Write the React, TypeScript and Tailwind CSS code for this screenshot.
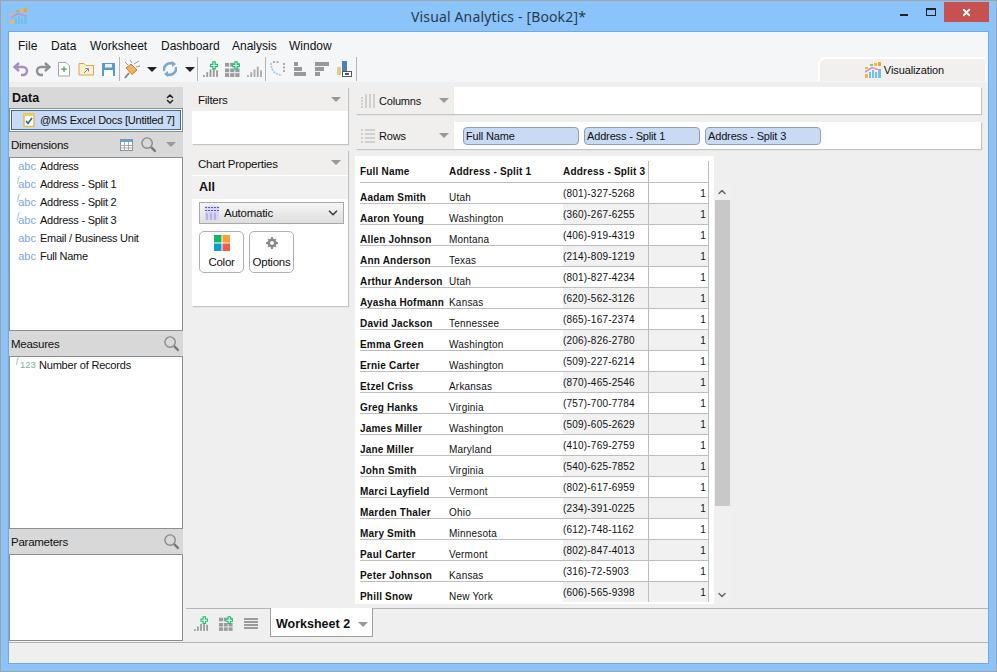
import { ChevronDown, ChevronUp, ChevronsUpDown, X } from 'lucide-react'

const rows = [
  ['Aadam Smith', 'Utah', '(801)-327-5268'],
  ['Aaron Young', 'Washington', '(360)-267-6255'],
  ['Allen Johnson', 'Montana', '(406)-919-4319'],
  ['Ann Anderson', 'Texas', '(214)-809-1219'],
  ['Arthur Anderson', 'Utah', '(801)-827-4234'],
  ['Ayasha Hofmann', 'Kansas', '(620)-562-3126'],
  ['David Jackson', 'Tennessee', '(865)-167-2374'],
  ['Emma Green', 'Washington', '(206)-826-2780'],
  ['Ernie Carter', 'Washington', '(509)-227-6214'],
  ['Etzel Criss', 'Arkansas', '(870)-465-2546'],
  ['Greg Hanks', 'Virginia', '(757)-700-7784'],
  ['James Miller', 'Washington', '(509)-605-2629'],
  ['Jane Miller', 'Maryland', '(410)-769-2759'],
  ['John Smith', 'Virginia', '(540)-625-7852'],
  ['Marci Layfield', 'Vermont', '(802)-617-6959'],
  ['Marden Thaler', 'Ohio', '(234)-391-0225'],
  ['Mary Smith', 'Minnesota', '(612)-748-1162'],
  ['Paul Carter', 'Vermont', '(802)-847-4013'],
  ['Peter Johnson', 'Kansas', '(316)-72-5903'],
  ['Phill Snow', 'New York', '(606)-565-9398'],
]

function Logo({ size = 16 }: { size?: number }) {
  return (
    <svg width={size} height={size} viewBox="0 0 16 16">
      <rect x="0" y="12" width="3" height="4" fill="#f6b73c" />
      <rect x="4" y="10" width="2" height="6" fill="#6cc3ee" />
      <rect x="7" y="8" width="2" height="8" fill="#6cc3ee" />
      <rect x="10" y="10" width="2" height="6" fill="#6cc3ee" />
      <rect x="13" y="7" width="3" height="9" fill="#6cc3ee" />
      <rect x="13" y="0" width="3" height="4" fill="#f6a623" />
      <rect x="9" y="1" width="3" height="3" fill="#f6b73c" />
      <rect x="5" y="2" width="3" height="2" fill="#8cc56a" />
      <rect x="0" y="5" width="3" height="2" fill="#f6b73c" />
      <path d="M0 10 L7 5.5 L16 8.5" stroke="#d08fc0" strokeWidth="1.5" fill="none" />
    </svg>
  )
}

function Plus() {
  return <path d="M10.5 1h2.5v2.5h2.5v2.5h-2.5v2.5h-2.5v-2.5h-2.5v-2.5h2.5z" fill="#fff" stroke="#1fc46a" strokeWidth="1.3" />
}

function Bars({ plus, size = 15 }: { plus?: boolean; size?: number }) {
  return (
    <svg width={size} height={size * 1.125} viewBox="0 0 16 18" className="block">
      <rect x="0" y="15" width="2" height="2" fill="#9b9b9b" />
      <rect x="3.5" y="12" width="2" height="5" fill="#9b9b9b" />
      <rect x="7" y="9" width="2" height="8" fill="#9b9b9b" />
      <rect x="10.5" y="6" width="2" height="11" fill="#9b9b9b" />
      <rect x="14" y="10" width="2" height="7" fill="#9b9b9b" />
      {plus && <Plus />}
    </svg>
  )
}

function GridPlus({ size = 15 }: { size?: number }) {
  return (
    <svg width={size} height={size * 1.125} viewBox="0 0 16 18" className="block">
      {[2, 8, 13].map(y => [0, 5.5, 11].map(x => <rect key={`${x}-${y}`} x={x} y={y} width="4.5" height="4" fill="#9b9b9b" />))}
      <Plus />
    </svg>
  )
}

function Magnifier() {
  return (
    <svg width="17" height="17" viewBox="0 0 18 18" fill="none" className="block">
      <circle cx="7.5" cy="7.5" r="5.5" stroke="#8a8a8a" strokeWidth="1.5" />
      <path d="M11.8 11.8 L16.5 16.5" stroke="#777" strokeWidth="2.4" />
    </svg>
  )
}

function Caret({ dark }: { dark?: boolean }) {
  return <span className={`block h-0 w-0 border-x-[5px] border-t-[5px] border-x-transparent ${dark ? 'border-t-[#222]' : 'border-t-[#999]'}`} />
}

function Sep() {
  return <span className="block h-[24px] w-px shrink-0 bg-[#b4b4b4]" />
}

function Toolbar() {
  return (
    <div className="flex h-[26px] items-center bg-[#f5f6f7] pl-[4px]">
      <svg width="16" height="16" viewBox="0 0 16 16" className="mr-[6px]" fill="none">
        <path d="M6 2 L1.5 6 L6 10 M2 6 H10 a3.5 3.5 0 0 1 0 8 H8" stroke="#a78cc6" strokeWidth="2.4" />
      </svg>
      <svg width="16" height="16" viewBox="0 0 16 16" className="mr-[5px]" fill="none">
        <path d="M10 2 L14.5 6 L10 10 M14 6 H6 a3.5 3.5 0 0 0 0 8 H8" stroke="#8f8f8f" strokeWidth="2.4" />
      </svg>
      <svg width="16" height="16" viewBox="0 0 16 16" className="mr-[5px]" fill="none">
        <path d="M2.5 1.5 H10 L13.5 5 V15 H2.5 Z" stroke="#a8a8a8" fill="#fff" />
        <path d="M8 5.5 V11 M5.2 8.2 H10.8" stroke="#3aa655" strokeWidth="1.2" />
      </svg>
      <svg width="18" height="16" viewBox="0 0 18 16" className="mr-[5px]" fill="none">
        <path d="M2 2.5 H7 L9 4.5 H16.5 V14 H2 Z" fill="#fdf0c8" stroke="#d0a85c" />
        <path d="M7 12 L11 8 M8.5 7.5 H11.5 V10.5" stroke="#4d94c8" />
      </svg>
      <svg width="18" height="16" viewBox="0 0 18 16" className="mr-px">
        <rect x="2" y="2" width="13" height="13" fill="#5b9bcc" />
        <rect x="5" y="3" width="7" height="3.5" fill="#e8f2fa" />
        <rect x="4" y="9" width="9" height="6" fill="#fff" />
      </svg>
      <Sep />
      <svg width="17" height="20" viewBox="0 0 17 20" className="ml-[4px]" fill="none">
        <path d="M1 19 L5 14" stroke="#888" strokeWidth="2" />
        <path d="M2 9 L7 5 L13 11 L8 15.5 Z" fill="#f0b45c" stroke="#b9803a" />
        <path d="M1 3 L4 6 M6 1 L8 4 M10 5 L15 2 M12 8 L16 7" stroke="#999" />
      </svg>
      <span className="ml-[6px]"><Caret dark /></span>
      <svg width="14" height="16" viewBox="0 0 14 16" className="ml-[6px]" fill="none">
        <path d="M1 10 C0 5 5 1 10 2.5 M13 6 C14 11 9 15 4 13.5" stroke="#7aa9d0" strokeWidth="2.6" />
        <path d="M9 0 L13 3 L9 6 Z M5 16 L1 13 L5 10 Z" fill="#7aa9d0" />
      </svg>
      <span className="ml-[8px]"><Caret dark /></span>
      <span className="ml-[2px]"><Sep /></span>
      <span className="ml-[5px]"><Bars plus /></span>
      <span className="ml-[7px]"><GridPlus /></span>
      <span className="ml-[7px] opacity-80"><Bars /></span>
      <span className="ml-[3px]"><Sep /></span>
      <svg width="15" height="16" viewBox="0 0 15 16" className="ml-[4px]" fill="none">
        <path d="M1 2 C1 9 5 14 12 14" stroke="#9cc6e6" strokeWidth="1.6" strokeDasharray="2 1" />
        <path d="M3 1 H10 M14 2 V12" stroke="#999" strokeWidth="1.6" strokeDasharray="2 1.5" />
      </svg>
      <svg width="12" height="14" viewBox="0 0 12 14" className="ml-[9px]" fill="#999">
        <rect y="0" width="4" height="4" /><rect y="5" width="8" height="4" /><rect y="10" width="12" height="4" />
      </svg>
      <svg width="14" height="14" viewBox="0 0 14 14" className="ml-[9px]" fill="#999">
        <rect y="0" width="14" height="4" /><rect y="5" width="9" height="4" /><rect y="10" width="5" height="4" />
      </svg>
      <svg width="15" height="16" viewBox="0 0 15 16" className="ml-[8px]">
        <rect x="0" y="6" width="4" height="8" fill="#e8c98a" />
        <rect x="5" y="0" width="5" height="10" fill="#4f7fb5" />
        <rect x="5.5" y="10.5" width="9" height="5" fill="#fff" stroke="#555" />
        <rect x="8" y="12" width="4" height="2" fill="#555" />
      </svg>
      <span className="ml-[4px]"><Sep /></span>
    </div>
  )
}

function SideHeader({ label, children }: { label: string; children?: React.ReactNode }) {
  return (
    <div className="flex h-[25px] items-center justify-between bg-[#d8d8d8] pl-[2px] pr-[3px] text-[11.5px] tracking-[-0.25px] text-[#111]">
      <span className="pt-[2px]">{label}</span>
      {children}
    </div>
  )
}

function Field({ label, calc }: { label: string; calc?: boolean }) {
  return (
    <div className="flex h-[18px] items-center">
      <span className="relative w-[26px] shrink-0 text-right text-[11px] text-[#7ba7e0]">
        {calc && <i className="absolute left-[7px] top-[-2px] font-['Liberation_Serif',serif] text-[8px]">f</i>}
        abc
      </span>
      <span className="ml-[4px] text-[11px] tracking-[-0.25px] text-[#111]">{label}</span>
    </div>
  )
}

function Sidebar() {
  return (
    <aside className="flex w-[174px] shrink-0 flex-col pt-[5px]">
      <div className="flex h-[21px] items-center justify-between bg-[#d8d8d8] pl-[3px] pr-[7px] pt-[2px] text-[12.5px] font-bold text-[#111]">
        <span>Data</span>
        <ChevronsUpDown size={12} strokeWidth={3} className="text-[#222]" />
      </div>
      <div className="flex h-[24px] items-center border border-[#8a8f94] bg-white px-px">
        <div className="flex h-[20px] w-full items-center whitespace-nowrap border border-[#3a6ea5] bg-[#c9daf4] pl-[11px] text-[11px] tracking-[-0.25px] text-[#111]">
          <svg width="12" height="14" viewBox="0 0 12 14" className="mr-[5px] shrink-0">
            <rect x="1" y="0.5" width="10" height="13" rx="1" fill="#fff" stroke="#e6b93c" strokeWidth="1.4" />
            <rect x="1" y="0.5" width="10" height="2.5" fill="#f3cf5a" />
            <path d="M3 8 L5 10.5 L9 5" stroke="#2a62a8" strokeWidth="1.6" fill="none" />
          </svg>
          @MS Excel Docs [Untitled 7]
        </div>
      </div>
      <SideHeader label="Dimensions">
        <div className="flex items-center gap-[7px] pr-[4px]">
          <svg width="13" height="12" viewBox="0 0 13 12" fill="none">
            <rect x="0.5" y="0.5" width="12" height="11" fill="#fff" stroke="#8a8f94" />
            <rect x="0.5" y="0.5" width="12" height="2.5" fill="#6ba0d0" />
            <path d="M0 6.5 H13 M0 9 H13 M4.5 3 V12 M8.5 3 V12" stroke="#a3a8ad" />
          </svg>
          <Magnifier />
          <span className="ml-[2px]"><Caret /></span>
        </div>
      </SideHeader>
      <div className="h-[174px] border border-[#8a8f94] bg-white">
        <div className="-mt-px">
          <Field label="Address" />
          <Field label="Address - Split 1" calc />
          <Field label="Address - Split 2" calc />
          <Field label="Address - Split 3" calc />
          <Field label="Email / Business Unit" />
          <Field label="Full Name" />
        </div>
      </div>
      <SideHeader label="Measures">
        <Magnifier />
      </SideHeader>
      <div className="h-[173px] border border-[#8a8f94] bg-white">
        <div className="flex h-[16px] items-center">
          <span className="relative w-[29px] shrink-0 pl-[10px] text-[9.5px] text-[#7fae9b]">
            <i className="absolute left-[6px] top-[-3px] font-['Liberation_Serif',serif] text-[8px]">f</i>
            123
          </span>
          <span className="text-[11px] tracking-[-0.2px] text-[#111]">Number of Records</span>
        </div>
      </div>
      <SideHeader label="Parameters">
        <Magnifier />
      </SideHeader>
      <div className="h-[87px] border border-[#8a8f94] bg-white" />
    </aside>
  )
}

function PanelHeader({ label, tall }: { label: string; tall?: boolean }) {
  return (
    <div className={`flex items-center justify-between bg-[#f0efed] pl-[6px] pr-[7px] text-[11.5px] tracking-[-0.25px] text-[#111] ${tall ? 'h-[25px]' : 'h-[24px]'}`}>
      <span className={tall ? 'pt-[4px]' : 'pt-[3px]'}>{label}</span>
      <Caret />
    </div>
  )
}

function MiddlePanels() {
  return (
    <div className="flex w-[156px] shrink-0 flex-col gap-[6px] pt-[5px]">
      <div className="h-[57px] bg-white shadow-[1px_1px_1px_#c4c4c4]">
        <PanelHeader label="Filters" />
      </div>
      <div className="h-[156px] bg-white shadow-[1px_1px_1px_#c4c4c4]">
        <PanelHeader label="Chart Properties" tall />
        <div className="mt-px flex h-[23px] items-center bg-[#f1f1f1] pl-[7px] text-[12.5px] font-bold text-[#111]">All</div>
        <div className="mx-[7px] mt-[3px] flex h-[22px] w-[145px] items-center border border-[#a9a9a9] bg-gradient-to-b from-[#f6f6f6] to-[#dedede] pl-[5px] pr-[3px] text-[11.5px] tracking-[-0.25px] text-[#111]">
          <svg width="14" height="14" viewBox="0 0 14 14" className="mr-[5px]">
            <rect width="14" height="14" fill="#d6d6f2" />
            <path d="M0 1.5 H14 M0 4.5 H14" stroke="#5c5ccf" strokeDasharray="2 1" />
            <path d="M2 7 V14 M6 7 V14 M10 7 V14" stroke="#8f8fd8" />
          </svg>
          <span className="flex-1 pt-[2px]">Automatic</span>
          <ChevronDown size={14} strokeWidth={3} className="text-[#444]" />
        </div>
        <div className="ml-[7px] mt-[7px] flex gap-[5px]">
          <div className="flex h-[42px] w-[45px] flex-col items-center rounded-[5px] border border-[#b0b0b0] pt-[3px] text-[11.5px] tracking-[-0.25px] text-[#111]">
            <svg width="16" height="16" viewBox="0 0 16 16">
              <rect width="7.5" height="7.5" fill="#16b667" />
              <rect x="8.5" width="7.5" height="7.5" fill="#f7a02e" />
              <rect y="8.5" width="7.5" height="7.5" fill="#0f9ccf" />
              <rect x="8.5" y="8.5" width="7.5" height="7.5" fill="#f25a4a" />
            </svg>
            <span className="mt-[3px] leading-[16px]">Color</span>
          </div>
          <div className="flex h-[42px] w-[45px] flex-col items-center rounded-[5px] border border-[#b0b0b0] pt-[3px] text-[11.5px] tracking-[-0.25px] text-[#111]">
            <svg width="16" height="16" viewBox="0 0 16 16" fill="#8c8c8c">
              <circle cx="8" cy="8" r="3.3" fill="none" stroke="#8c8c8c" strokeWidth="2.6" />
              <path d="M7 2h2v2.5h-2z M7 11.5h2v2.5h-2z M2 7h2.5v2h-2.5z M11.5 7h2.5v2h-2.5z M3.5 4.6l1.1-1.1 1.8 1.8-1.1 1.1z M9.6 10.7l1.1-1.1 1.8 1.8-1.1 1.1z M11.4 3.5l1.1 1.1-1.8 1.8-1.1-1.1z M5.3 9.6l1.1 1.1-1.8 1.8-1.1-1.1z" />
            </svg>
            <span className="mt-[3px] leading-[16px]">Options</span>
          </div>
        </div>
      </div>
    </div>
  )
}

function Shelf({ label, icon, children }: { label: string; icon: React.ReactNode; children?: React.ReactNode }) {
  return (
    <div className="flex h-[27px] w-[625px] bg-white shadow-[1px_1px_1px_#c4c4c4]">
      <div className="flex w-[98px] shrink-0 items-center border-r border-[#f0ead8] bg-[#f0efed] pl-[5px] pr-[4px] text-[11px] tracking-[-0.2px] text-[#111]">
        <span className="mr-[4px] w-[14px]">{icon}</span>
        <span className="flex-1 pt-[2px]">{label}</span>
        <Caret />
      </div>
      {children}
    </div>
  )
}

function Pill({ label }: { label: string }) {
  return (
    <div className="flex h-[18px] w-[116px] items-center rounded-[4px] border border-[#8f9fb8] bg-[#c9daf4] pl-[2px] pt-px text-[11px] tracking-[-0.15px] text-[#111]">
      {label}
    </div>
  )
}

function DataTable() {
  return (
    <div className="h-[448px] w-[359px] shrink-0 overflow-hidden bg-white pl-[5px] pt-[5px]">
      <div className="h-[441px] w-[349px] overflow-hidden text-[10px] tracking-[0.2px] text-[#111]">
        <div className="grid h-[22px] grid-cols-[89px_114px_86px_60px] border-b border-[#bdbdbd] font-bold">
          <span className="pt-[3px]">Full Name</span>
          <span className="pt-[3px]">Address - Split 1</span>
          <span className="whitespace-nowrap border-r border-[#bdbdbd] pt-[3px]">Address - Split 3</span>
          <span className="border-r border-[#bdbdbd]" />
        </div>
        {rows.map((r, i) => {
          const shade = i % 2 === 1 ? 'bg-[#f1f1f1]' : ''
          return (
            <div key={r[0]} className="grid h-[21px] grid-cols-[89px_114px_86px_60px] border-b border-[#bdbdbd]">
              <span className="whitespace-nowrap pt-[9px] font-bold leading-[11px]">{r[0]}</span>
              <span className="pt-[9px] leading-[11px]">{r[1]}</span>
              <span className={`border-r border-[#bdbdbd] pt-[5px] leading-[11px] ${shade}`}>{r[2]}</span>
              <span className={`border-r border-[#bdbdbd] pr-[2px] pt-[5px] text-right leading-[11px] ${shade}`}>1</span>
            </div>
          )
        })}
      </div>
    </div>
  )
}

function Scrollbar() {
  return (
    <div className="mt-[27px] flex h-[421px] w-[16px] flex-col items-center bg-[#f0f0f0]">
      <ChevronUp size={12} strokeWidth={3} className="mt-[3px] text-[#666]" />
      <div className="mt-[2px] h-[306px] w-[15px] bg-[#c8c8c8]" />
      <div className="flex-1" />
      <ChevronDown size={12} strokeWidth={3} className="mb-[3px] text-[#666]" />
    </div>
  )
}

export default function App() {
  return (
    <div className="flex h-[672px] w-[997px] flex-col overflow-hidden border border-[#a3a3a3] bg-[#8ac4fb] font-['Liberation_Sans',sans-serif]">
      <div className="flex h-[30px] shrink-0 items-center">
        <div className="ml-[10px] mt-[-1px]"><Logo /></div>
        <div className="flex-1 pl-[70px] text-center font-['Noto_Sans',sans-serif] text-[14px] tracking-[0.15px] text-[#2b3a4a]">Visual Analytics - [Book2]*</div>
        <div className="flex items-start self-start pt-px">
          <span className="mr-[18px] mt-[12px] h-[2px] w-[8px] bg-[#222]" />
          <span className="mr-[8px] mt-[6px] h-[8px] w-[10px] border border-t-2 border-[#222]" />
          <div className="mr-[7px] flex h-[20px] w-[45px] items-center justify-center bg-[#c75050]">
            <X size={11} strokeWidth={4} className="text-white" />
          </div>
        </div>
      </div>
      <div className="mx-[7px] flex h-[633px] flex-col border border-[#76a9da] bg-[#efefef]">
        <div className="flex h-[24px] items-center bg-[#f5f6f7] pl-[9px] pt-[3px] text-[12px] text-[#111]">
          <span className="w-[33px]">File</span>
          <span className="w-[39px]">Data</span>
          <span className="w-[71px]">Worksheet</span>
          <span className="w-[71px]">Dashboard</span>
          <span className="w-[57px]">Analysis</span>
          <span>Window</span>
        </div>
        <div className="relative">
          <Toolbar />
          <div className="absolute right-[3px] top-px flex h-[24px] w-[167px] items-center justify-center rounded-tl-[8px] border-l-2 border-t-2 border-white bg-[#f1f0ee] pl-[4px] text-[11px] tracking-[-0.1px] text-[#111]">
            <span className="mr-[3px]"><Logo /></span>
            Visualization
          </div>
        </div>
        <div className="flex min-h-0 flex-1">
          <Sidebar />
          <div className="flex min-w-0 flex-1 flex-col">
            <div className="flex h-[527px] gap-[8px] pl-[9px]">
              <MiddlePanels />
              <div className="flex flex-col gap-[8px] pt-[5px]">
                <Shelf
                  label="Columns"
                  icon={
                    <svg width="14" height="14" viewBox="0 0 14 14" fill="#cfcfcf">
                      <path d="M0 3h2v2h-2z M0 6h2v2h-2z M0 9h2v2h-2z M0 12h2v2h-2z M4 0h2v14h-2z M8 0h2v14h-2z M12 0h2v14h-2z" />
                    </svg>
                  }
                />
                <Shelf
                  label="Rows"
                  icon={
                    <svg width="14" height="14" viewBox="0 0 14 14" fill="#cfcfcf">
                      <path d="M0 0h2v2h-2z M0 4h2v2h-2z M0 8h2v2h-2z M0 12h2v2h-2z M4 0h10v2h-10z M4 4h10v2h-10z M4 8h10v2h-10z M4 12h10v2h-10z" />
                    </svg>
                  }
                >
                  <div className="flex items-center gap-[5px] pl-[9px]">
                    <Pill label="Full Name" />
                    <Pill label="Address - Split 1" />
                    <Pill label="Address - Split 3" />
                  </div>
                </Shelf>
                <div className="-ml-px -mt-px flex">
                  <DataTable />
                  <Scrollbar />
                </div>
              </div>
            </div>
            <div className="ml-[3px] flex h-[34px] items-start border-t border-[#b5b5b5] pl-[8px] pt-[7px]">
              <Bars plus size={14} />
              <span className="ml-[11px]"><GridPlus size={14} /></span>
              <svg width="14" height="11" viewBox="0 0 14 11" className="ml-[11px] mt-[2px]" fill="#9b9b9b">
                <path d="M0 0h14v2h-14z M0 3h14v2h-14z M0 6h14v2h-14z M0 9h14v2h-14z" />
              </svg>
              <div className="-mt-[8px] ml-[12px] flex h-[29px] w-[103px] items-center border-x border-b border-[#a0a0a0] bg-white pl-[5px] pt-[5px] text-[12.5px] font-bold text-[#111]">
                <span className="flex-1">Worksheet 2</span>
                <span className="mr-[4px]"><Caret /></span>
              </div>
            </div>
          </div>
        </div>
        <div className="h-[21px] border-t border-[#b5b5b5] bg-[#efefef]" />
      </div>
    </div>
  )
}
